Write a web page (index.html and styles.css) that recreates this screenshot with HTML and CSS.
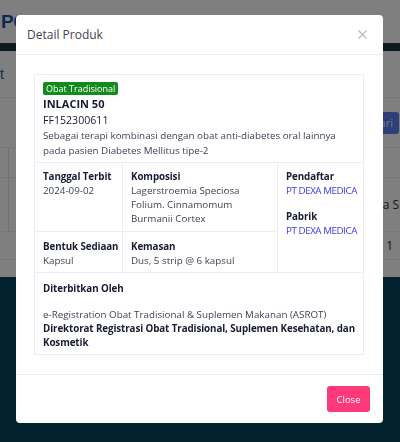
FILE: index.html
```html
<!DOCTYPE html>
<html lang="id">
<head>
<meta charset="utf-8">
<title>Detail Produk</title>
<link rel="stylesheet" href="styles.css">
</head>
<body>
<div class="page">
  <header class="topbar"><span class="brand">PO</span></header>
  <div class="band"></div>
  <main class="content">
    <div class="bg-row bg-r1"><span class="crumb">t</span></div>
    <div class="bg-row bg-r2"><span class="search">Cari</span></div>
    <div class="bg-row bg-r3 bg-grid"><span class="cell-l"></span><span class="cell-r"></span></div>
    <div class="bg-row bg-r4 bg-grid"><span class="cell-l"></span><span class="cell-r">Kera S</span></div>
    <div class="bg-row bg-r5"><span class="cell-r num">1</span></div>
    <div class="bg-row bg-r6"></div>
  </main>
  <footer class="dark"></footer>
</div>

<div class="backdrop"></div>

<div class="modal" role="dialog" aria-label="Detail Produk">
  <div class="modal-header">
    <h5 class="modal-title">Detail Produk</h5>
    <span class="modal-close" aria-label="Close">
      <svg width="9" height="9" viewBox="0 0 9 9"><path d="M0.5 0.5 L8.5 8.5 M8.5 0.5 L0.5 8.5" stroke="#b5b5c3" stroke-width="1.1" fill="none"/></svg>
    </span>
  </div>
  <div class="modal-body">
    <table class="detail">
      <colgroup><col class="c1"><col class="c2"><col class="c3"></colgroup>
      <tr class="tr1">
        <td colspan="3" class="head-cell">
          <span class="badge">Obat Tradisional</span>
          <div class="name">INLACIN 50</div>
          <div class="code">FF152300611</div>
          <div class="desc">Sebagai terapi kombinasi dengan obat anti-diabetes oral lainnya pada pasien Diabetes Mellitus tipe-2</div>
        </td>
      </tr>
      <tr class="tr2">
        <td><div class="lbl nw">Tanggal Terbit</div><div class="val">2024-09-02</div></td>
        <td><div class="lbl">Komposisi</div><div class="val">Lagerstroemia Speciosa Folium. Cinnamomum Burmanii Cortex</div></td>
        <td rowspan="2" class="side">
          <div class="lbl">Pendaftar</div><div class="val link">PT DEXA MEDICA</div>
          <div class="lbl gap">Pabrik</div><div class="val link">PT DEXA MEDICA</div>
        </td>
      </tr>
      <tr class="tr3">
        <td><div class="lbl nw">Bentuk Sediaan</div><div class="val">Kapsul</div></td>
        <td><div class="lbl">Kemasan</div><div class="val">Dus, 5 strip @ 6 kapsul</div></td>
      </tr>
      <tr class="tr4">
        <td colspan="3">
          <div class="lbl">Diterbitkan Oleh</div>
          <div class="val gap">e-Registration Obat Tradisional &amp; Suplemen Makanan (ASROT)</div>
          <div class="lbl">Direktorat Registrasi Obat Tradisional, Suplemen Kesehatan, dan Kosmetik</div>
        </td>
      </tr>
    </table>
  </div>
  <div class="modal-footer">
    <button class="btn-close" type="button">Close</button>
  </div>
</div>
</body>
</html>
```

FILE: styles.css
```css
* { box-sizing: border-box; }
html, body { margin: 0; padding: 0; }
body {
  width: 400px;
  height: 442px;
  overflow: hidden;
  font-family: "Open Sans", "Liberation Sans", sans-serif;
  background: #06445e;
}

/* ---------- underlying page ---------- */
.page { display: flex; flex-direction: column; height: 442px; }
.topbar {
  height: 43px;
  background: #ffffff;
  display: flex;
  align-items: center;
  padding-left: 1px;
}
.brand {
  font-family: "Liberation Sans", sans-serif;
  font-weight: 700;
  font-size: 19px;
  color: #1a55a8;
  letter-spacing: -0.5px;
}
.band { height: 8px; background: #1a3440; }
.content { background: #ffffff; display: flex; flex-direction: column; }
.bg-row { border-bottom: 1px solid #ececec; display: flex; align-items: center; justify-content: space-between; }
.bg-r1 { height: 47px; }
.bg-r2 { height: 50px; justify-content: flex-end; }
.bg-r3 { height: 30px; }
.bg-r4 { height: 54px; }
.bg-r5 { height: 28px; justify-content: flex-end; }
.bg-r6 { height: 17px; border-bottom: none; }
.crumb { color: #1a55a8; font-size: 14px; font-family: "Liberation Sans", sans-serif; }
.search {
  background: #5a7cf0;
  color: #e8ecff;
  font-size: 11px;
  height: 22px;
  line-height: 22px;
  padding: 0 6px 0 20px;
  border-radius: 3px;
  margin-right: 1px;
}
.bg-grid { align-items: stretch; }
.cell-l { width: 9px; border-right: 1px solid #e0e0e0; }
.cell-r { font-size: 12px; color: #333; display: flex; align-items: center; white-space: nowrap; margin-right: 1px; }
.num { padding-right: 6px; color: #222; }
.dark { flex: 1; background: #06445e; }

/* ---------- backdrop & modal ---------- */
.backdrop {
  position: fixed;
  inset: 0;
  background: rgba(0, 0, 0, 0.5);
}
.modal {
  position: fixed;
  left: 16px;
  top: 15px;
  width: 367px;
  height: 408px;
  background: #ffffff;
  border-radius: 4px;
  display: flex;
  flex-direction: column;
}
.modal-header {
  height: 40px;
  border-bottom: 1px solid #ebedf3;
  display: flex;
  align-items: center;
  justify-content: space-between;
  padding: 0 16px 0 11px;
}
.modal-title {
  margin: 0;
  font-size: 12px;
  font-weight: 500;
  color: #3f4254;
}
.modal-close { display: flex; align-items: center; }
.modal-body {
  flex: 1;
  padding: 19px 20px 0 18px;
}
.modal-footer {
  height: 49px;
  border-top: 1px solid #ebedf3;
  display: flex;
  align-items: center;
  justify-content: flex-end;
  padding-right: 13px;
}
.btn-close {
  width: 43px;
  height: 26px;
  border: none;
  border-radius: 3px;
  background: #fd397a;
  color: #ffffff;
  font-family: inherit;
  font-size: 9.5px;
  padding: 0;
}

/* ---------- detail table ---------- */
.detail {
  width: 329px;
  border-collapse: collapse;
  table-layout: fixed;
  font-size: 9.8px;
  line-height: 14px;
  color: #3f4254;
}
.c1 { width: 88px; }
.c2 { width: 155px; }
.c3 { width: 86px; }
.detail td {
  border: 1px solid #ebedf3;
  vertical-align: top;
  padding: 6px 8px 4px;
}
.detail td.side { padding-right: 2px; padding-top: 7px; }
.tr1 td { height: 86px; padding-top: 7px; }
.tr2 td { height: 69px; padding-top: 7px; }
.tr3 td { height: 41px; padding-top: 8px; }
.tr4 td { height: 81px; padding-top: 9px; }
.badge {
  display: inline-block;
  background: #138a1c;
  color: #ffffff;
  font-size: 9px;
  line-height: 13px;
  padding: 0 3px;
  border-radius: 2px;
}
.name { font-size: 11px; font-weight: 700; line-height: 16px; color: #181c32; }
.code { font-size: 10.6px; line-height: 16px; color: #181c32; }
.desc { line-height: 15px; }
.lbl { font-weight: 700; color: #181c32; letter-spacing: -0.1px; }
.lbl.nw { white-space: nowrap; }
.lbl.gap { margin-top: 12px; }
.val.gap { margin-top: 12px; }
.link { color: #3b3bf5; white-space: nowrap; letter-spacing: -0.45px; }
```
